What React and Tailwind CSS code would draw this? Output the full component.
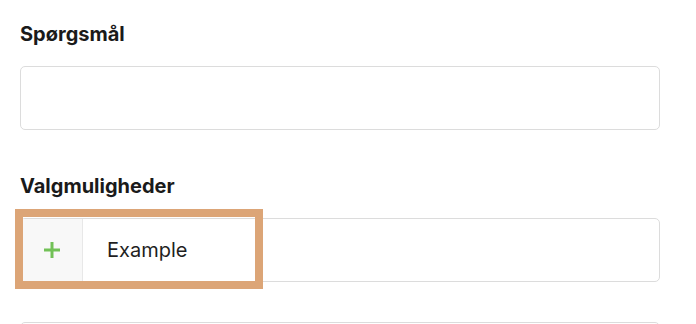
export default function App() {
  return (
    <div className="w-[696px] h-[324px] overflow-hidden bg-white" style={{ fontFamily: 'Inter, "Noto Sans", sans-serif' }}>
      <div className="w-[640px] ml-5 pt-[22px]">
        <label className="block text-[20px] leading-6 font-bold text-[#1a1a1a] mb-5">Spørgsmål</label>
        <div className="h-16 border border-[#dcdcdc] rounded-[5px]" />

        <label className="block text-[20px] leading-6 font-bold text-[#1a1a1a] mt-[44px] mb-5">Valgmuligheder</label>
        <div className="relative">
          <div className="flex h-16 border border-[#dcdcdc] rounded-[5px] overflow-hidden">
            <div className="w-[62px] flex items-center justify-center bg-[#f8f8f8] border-r border-[#e8e8e8]">
              <svg width="16" height="16" viewBox="0 0 16 16">
                <rect x="6.5" y="0" width="3" height="16" fill="#72c157" />
                <rect x="0" y="6.5" width="16" height="3" fill="#72c157" />
              </svg>
            </div>
            <div className="flex items-center pl-6 text-[20px] text-[#1f1f1f]">Example</div>
          </div>
          {/* highlight */}
          <div className="absolute left-[-5px] top-[-9px] w-[248px] h-[80px] border-8 border-[#dca577]" />
        </div>

        <div className="h-16 mt-10 border border-[#dcdcdc] rounded-[5px]" />
      </div>
    </div>
  );
}
